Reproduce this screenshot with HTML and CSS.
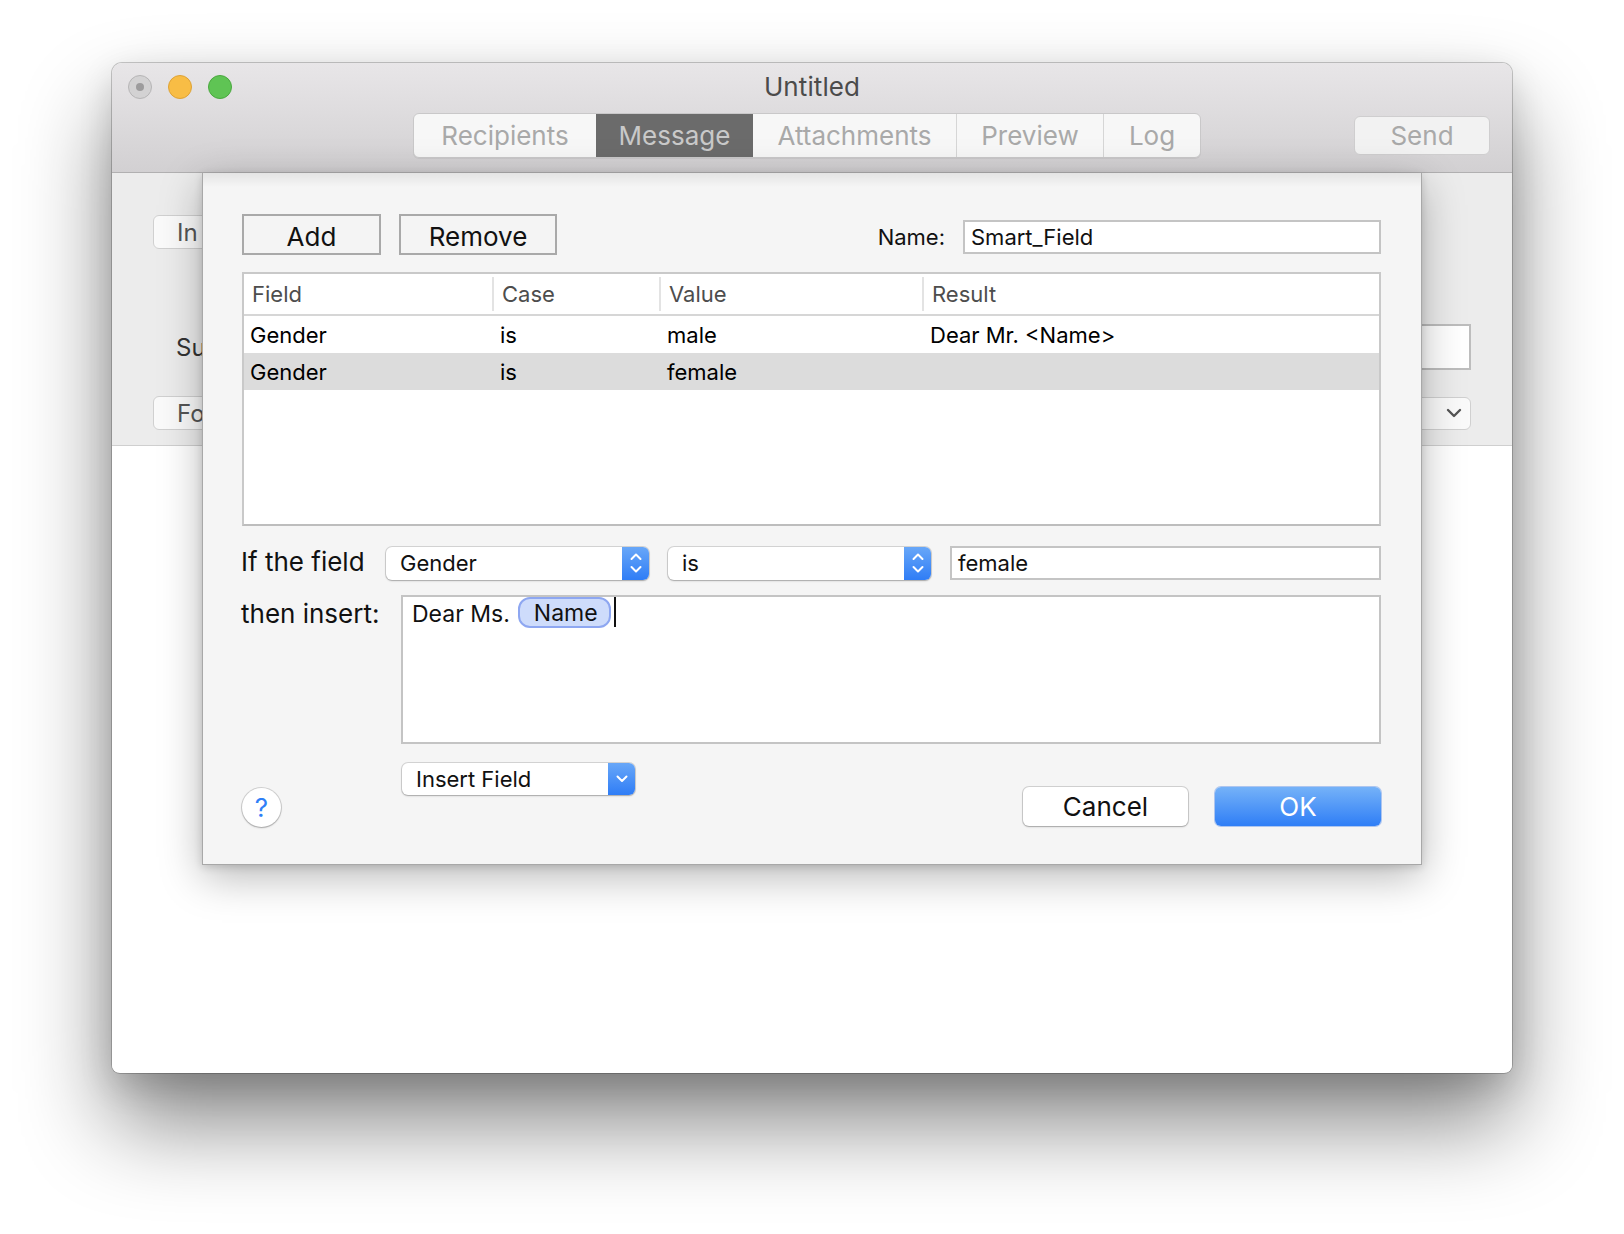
FILE: index.html
```html
<!DOCTYPE html>
<html lang="en">
<head>
<meta charset="utf-8">
<title>Untitled</title>
<link rel="stylesheet" href="styles.css">
</head>
<body>
<div class="window">
  <div class="titlebar">
    <div class="title-row">
      <div class="lights">
        <span class="light light-close"><span class="dot"></span></span>
        <span class="light light-min"></span>
        <span class="light light-max"></span>
      </div>
      <div class="title">Untitled</div>
      <div class="lights-spacer"></div>
    </div>
    <div class="tool-row">
      <div class="tabs">
        <div class="tab tab-recipients">Recipients</div>
        <div class="tab tab-message is-selected">Message</div>
        <div class="tab tab-attachments">Attachments</div>
        <div class="tab tab-preview">Preview</div>
        <div class="tab tab-log">Log</div>
      </div>
      <div class="send-btn">Send</div>
    </div>
  </div>

  <div class="content">
    <div class="bg-area">
      <div class="bg-row bg-row1">
        <div class="bg-button">In</div>
      </div>
      <div class="bg-row bg-row2">
        <div class="bg-label">Su</div>
        <div class="bg-field"></div>
      </div>
      <div class="bg-row bg-row3">
        <div class="bg-button">Fo</div>
        <div class="bg-popup">
          <svg class="bg-chev" width="16" height="10" viewBox="0 0 16 10"><path d="M2 2 L8 8 L14 2" fill="none" stroke="#555" stroke-width="2.4" stroke-linecap="round" stroke-linejoin="round"/></svg>
        </div>
      </div>
    </div>
    <div class="bg-white"></div>

    <div class="sheet">
      <div class="sheet-top">
        <div class="sq-btn btn-add">Add</div>
        <div class="sq-btn btn-remove">Remove</div>
        <div class="name-group">
          <span class="name-label">Name:</span>
          <div class="text-field name-field">Smart_Field</div>
        </div>
      </div>

      <div class="table">
        <div class="t-row t-head">
          <div class="cell c-field">Field</div>
          <div class="cell c-case">Case</div>
          <div class="cell c-value">Value</div>
          <div class="cell c-result">Result</div>
        </div>
        <div class="t-row">
          <div class="cell c-field">Gender</div>
          <div class="cell c-case">is</div>
          <div class="cell c-value">male</div>
          <div class="cell c-result">Dear Mr. &lt;Name&gt;</div>
        </div>
        <div class="t-row is-selected">
          <div class="cell c-field">Gender</div>
          <div class="cell c-case">is</div>
          <div class="cell c-value">female</div>
          <div class="cell c-result"></div>
        </div>
      </div>

      <div class="cond-row">
        <span class="form-label cond-label">If the field</span>
        <div class="popup popup-field">
          <span class="popup-text">Gender</span>
          <span class="stepper">
            <svg width="14" height="24" viewBox="0 0 14 24"><path d="M2.5 8 L7 3.5 L11.5 8 M2.5 16 L7 20.5 L11.5 16" fill="none" stroke="#fff" stroke-width="2" stroke-linecap="round" stroke-linejoin="round"/></svg>
          </span>
        </div>
        <div class="popup popup-case">
          <span class="popup-text">is</span>
          <span class="stepper">
            <svg width="14" height="24" viewBox="0 0 14 24"><path d="M2.5 8 L7 3.5 L11.5 8 M2.5 16 L7 20.5 L11.5 16" fill="none" stroke="#fff" stroke-width="2" stroke-linecap="round" stroke-linejoin="round"/></svg>
          </span>
        </div>
        <div class="text-field value-field">female</div>
      </div>

      <div class="insert-row">
        <span class="form-label insert-label">then insert:</span>
        <div class="insert-area">
          <span class="insert-text">Dear Ms.</span>
          <span class="token">Name</span>
          <span class="caret"></span>
        </div>
      </div>

      <div class="sheet-bottom">
        <div class="help-btn">?</div>
        <div class="popup popup-insert">
          <span class="popup-text">Insert Field</span>
          <span class="stepper">
            <svg width="14" height="10" viewBox="0 0 14 10"><path d="M2.5 2.5 L7 7 L11.5 2.5" fill="none" stroke="#fff" stroke-width="2" stroke-linecap="round" stroke-linejoin="round"/></svg>
          </span>
        </div>
        <div class="push-btn btn-cancel">Cancel</div>
        <div class="push-btn btn-ok">OK</div>
      </div>
    </div>
  </div>
</div>
</body>
</html>
```

FILE: styles.css
```css
* { box-sizing: border-box; }

html, body {
  margin: 0;
  padding: 0;
  background: #ffffff;
}

body {
  font-family: Inter, "Noto Sans", "Liberation Sans", sans-serif;
  color: #000;
  padding: 63px 0 0 112px;
  height: 1234px;
  overflow: hidden;
}

.window {
  position: relative;
  width: 1400px;
  height: 1010px;
  border-radius: 10px 10px 8px 8px;
  background: #ffffff;
  box-shadow: 0 0 0 1px rgba(0,0,0,0.2), 0 50px 90px rgba(0,0,0,0.48), 0 12px 34px rgba(0,0,0,0.14);
  overflow: hidden;
}

/* ---------- title bar ---------- */
.titlebar {
  height: 110px;
  background: linear-gradient(#e8e6e8, #d2d0d2);
  border-bottom: 1px solid #b1b0b1;
  display: flex;
  flex-direction: column;
}

.title-row {
  height: 46px;
  display: flex;
  align-items: center;
}

.lights {
  width: 120px;
  display: flex;
  gap: 16px;
  padding-left: 16px;
  padding-top: 1px;
}

.lights-spacer { width: 120px; }

.light {
  width: 24px;
  height: 24px;
  border-radius: 50%;
  display: flex;
  align-items: center;
  justify-content: center;
}

.light-close {
  background: #d3d2d3;
  border: 1px solid #b6b5b6;
}
.light-close .dot {
  width: 8px;
  height: 8px;
  border-radius: 50%;
  background: #9d9c9d;
}
.light-min {
  background: #f8bd45;
  border: 1px solid #dea236;
}
.light-max {
  background: #5fc454;
  border: 1px solid #4aa83f;
}

.title {
  flex: 1;
  text-align: center;
  font-size: 26px;
  color: #4b4b4b;
  letter-spacing: 0.1px;
}

.tool-row {
  display: flex;
  align-items: flex-start;
  padding-left: 301px;
  padding-top: 4px;
}

.tabs {
  display: flex;
  height: 45px;
  border: 1px solid #c9c8c9;
  border-radius: 6px;
  background: #f7f7f7;
  overflow: hidden;
  box-shadow: 0 1px 0 rgba(0,0,0,0.05);
}

.tab {
  display: flex;
  align-items: center;
  justify-content: center;
  font-size: 26px;
  color: #a9a9a9;
  border-left: 1px solid #d6d6d6;
}
.tab:first-child { border-left: none; }
.tab-recipients { width: 182px; }
.tab-message { width: 156px; }
.tab-attachments { width: 204px; }
.tab-preview { width: 147px; }
.tab-log { width: 97px; }

.tab.is-selected {
  background: #6b6b6b;
  color: #c9c9c9;
  border-left-color: #6b6b6b;
}
.tab.is-selected + .tab { border-left-color: #6b6b6b; }

.send-btn {
  margin-left: auto;
  margin-right: 22px;
  margin-top: 3px;
  width: 136px;
  height: 39px;
  border: 1px solid #cfcecf;
  border-radius: 6px;
  background: #f2f2f2;
  color: #a9a9a9;
  font-size: 26px;
  display: flex;
  align-items: center;
  justify-content: center;
}

/* ---------- background content ---------- */
.content {
  position: relative;
  height: 899px;
  display: flex;
  flex-direction: column;
}

.bg-area {
  height: 273px;
  background: #ececec;
  border-bottom: 1px solid #cfcfcf;
  padding: 42px 41px 0 41px;
  display: flex;
  flex-direction: column;
}

.bg-row {
  display: flex;
  align-items: center;
}

.bg-button {
  width: 220px;
  height: 34px;
  border-radius: 6px;
  background: #fafafa;
  border: 1px solid #d0d0d0;
  font-size: 24px;
  color: #555;
  padding-left: 23px;
  display: flex;
  align-items: center;
}

.bg-row2 {
  margin-top: 75px;
}
.bg-label {
  font-size: 24px;
  color: #333;
  padding-left: 23px;
}
.bg-field {
  margin-left: auto;
  width: 200px;
  height: 46px;
  background: #fff;
  border: 2px solid #bdbdbd;
}

.bg-row3 {
  margin-top: 26px;
}
.bg-popup {
  margin-left: auto;
  width: 200px;
  height: 33px;
  border-radius: 6px;
  background: #fafafa;
  border: 1px solid #d0d0d0;
  display: flex;
  align-items: center;
  justify-content: flex-end;
  padding-right: 8px;
}

.bg-white {
  flex: 1;
  background: #fff;
}

/* ---------- sheet ---------- */
.sheet {
  position: absolute;
  left: 90px;
  top: 0;
  width: 1220px;
  height: 692px;
  background: #f5f5f5;
  border: 1px solid #a8a8a8;
  border-top: none;
  box-shadow: 0 12px 40px rgba(0,0,0,0.28), 0 2px 8px rgba(0,0,0,0.15);
  padding: 41px 40px 0 39px;
  display: flex;
  flex-direction: column;
}
.sheet::before {
  content: "";
  position: absolute;
  left: 0; right: 0; top: 0;
  height: 14px;
  background: linear-gradient(rgba(0,0,0,0.07), rgba(0,0,0,0));
}

.sheet-top {
  display: flex;
  align-items: flex-start;
  height: 41px;
}

.sq-btn {
  height: 41px;
  border: 2px solid #a9a9a9;
  background: #f4f4f4;
  font-size: 26px;
  color: #111;
  display: flex;
  align-items: center;
  justify-content: center;
  padding-top: 3px;
}
.btn-add { width: 139px; }
.btn-remove { width: 158px; margin-left: 18px; }

.name-group {
  margin-left: auto;
  display: flex;
  align-items: center;
  margin-top: 6px;
}
.name-label {
  font-size: 22px;
  color: #111;
  margin-right: 18px;
}

.text-field {
  background: #fff;
  border: 2px solid #c4c4c4;
  font-size: 22px;
  color: #111;
  display: flex;
  align-items: center;
}
.name-field {
  width: 418px;
  height: 34px;
  padding-left: 6px;
}

/* table */
.table {
  margin-top: 17px;
  height: 254px;
  background: #fff;
  border: 2px solid #c9c9c9;
  border-bottom-color: #bdbdbd;
  display: flex;
  flex-direction: column;
}

.t-row {
  display: flex;
  height: 37px;
  align-items: center;
  font-size: 22px;
}
.t-row.is-selected { background: #dcdcdc; }

.t-head {
  height: 42px;
  border-bottom: 2px solid #d6d6d6;
  color: #4d4d4d;
}

.cell { white-space: nowrap; }
.c-field { width: 248px; padding-left: 6px; }
.c-case { width: 167px; padding-left: 8px; }
.c-value { width: 263px; padding-left: 8px; }
.c-result { flex: 1; padding-left: 8px; }

.t-head .cell { padding-left: 8px; height: 34px; display: flex; align-items: center; }
.t-head .cell + .cell { border-left: 2px solid #e3e3e3; }

/* condition row */
.cond-row {
  margin-top: 20px;
  display: flex;
  align-items: center;
  height: 34px;
}

.form-label {
  font-size: 26px;
  color: #111;
  margin-left: -1px;
  white-space: nowrap;
  flex-shrink: 0;
}
.cond-label { width: 145px; margin-top: -3px; }

.popup {
  height: 33px;
  background: #fff;
  border-radius: 6px;
  box-shadow: 0 0 0 1px rgba(0,0,0,0.13), 0 1px 2px rgba(0,0,0,0.22);
  display: flex;
  align-items: center;
  overflow: hidden;
  flex-shrink: 0;
}
.popup-text {
  flex: 1;
  font-size: 22px;
  color: #111;
  padding-left: 14px;
}
.stepper {
  width: 27px;
  align-self: stretch;
  background: linear-gradient(#68a7f8, #2f7df6);
  display: flex;
  align-items: center;
  justify-content: center;
}

.popup-field { width: 263px; }
.popup-case { width: 263px; margin-left: 19px; }
.value-field {
  width: 432px;
  height: 34px;
  margin-left: 19px;
  padding-left: 6px;
}

/* insert row */
.insert-row {
  margin-top: 15px;
  display: flex;
  align-items: flex-start;
}
.insert-label {
  width: 160px;
  margin-top: 3px;
}
.insert-area {
  margin-left: auto;
  width: 980px;
  height: 149px;
  background: #fff;
  border: 2px solid #c4c4c4;
  padding: 0 0 0 9px;
  display: flex;
  align-items: flex-start;
}
.insert-text {
  font-size: 23px;
  color: #111;
  margin-top: 3px;
}
.token {
  margin-left: 8px;
  height: 31px;
  padding: 0 11px 0 14px;
  border: 2px solid #8ea7f1;
  border-radius: 12px;
  background: #cedcfb;
  font-size: 23px;
  color: #111;
  display: flex;
  align-items: center;
}
.caret {
  width: 2px;
  height: 30px;
  background: #111;
  margin-left: 3px;
}

/* bottom row */
.sheet-bottom {
  margin-top: 19px;
  display: flex;
  align-items: flex-start;
}
.help-btn {
  margin-top: 25px;
  width: 39px;
  height: 39px;
  border-radius: 50%;
  background: #fff;
  box-shadow: 0 0 0 1px rgba(0,0,0,0.14), 0 1px 2px rgba(0,0,0,0.22);
  color: #2f7ff7;
  font-size: 26px;
  display: flex;
  align-items: center;
  justify-content: center;
}
.popup-insert {
  width: 233px;
  height: 32px;
  margin-left: 121px;
}

.push-btn {
  margin-top: 24px;
  width: 165px;
  height: 39px;
  border-radius: 6px;
  font-size: 26px;
  display: flex;
  align-items: center;
  justify-content: center;
}
.btn-cancel {
  margin-left: auto;
  background: #fff;
  color: #111;
  box-shadow: 0 0 0 1px rgba(0,0,0,0.14), 0 1px 2px rgba(0,0,0,0.22);
}
.btn-ok {
  margin-left: 27px;
  width: 166px;
  background: linear-gradient(#75b2f8, #2f7ef6);
  color: #fff;
  box-shadow: 0 0 0 1px rgba(40,110,230,0.35);
}
```
